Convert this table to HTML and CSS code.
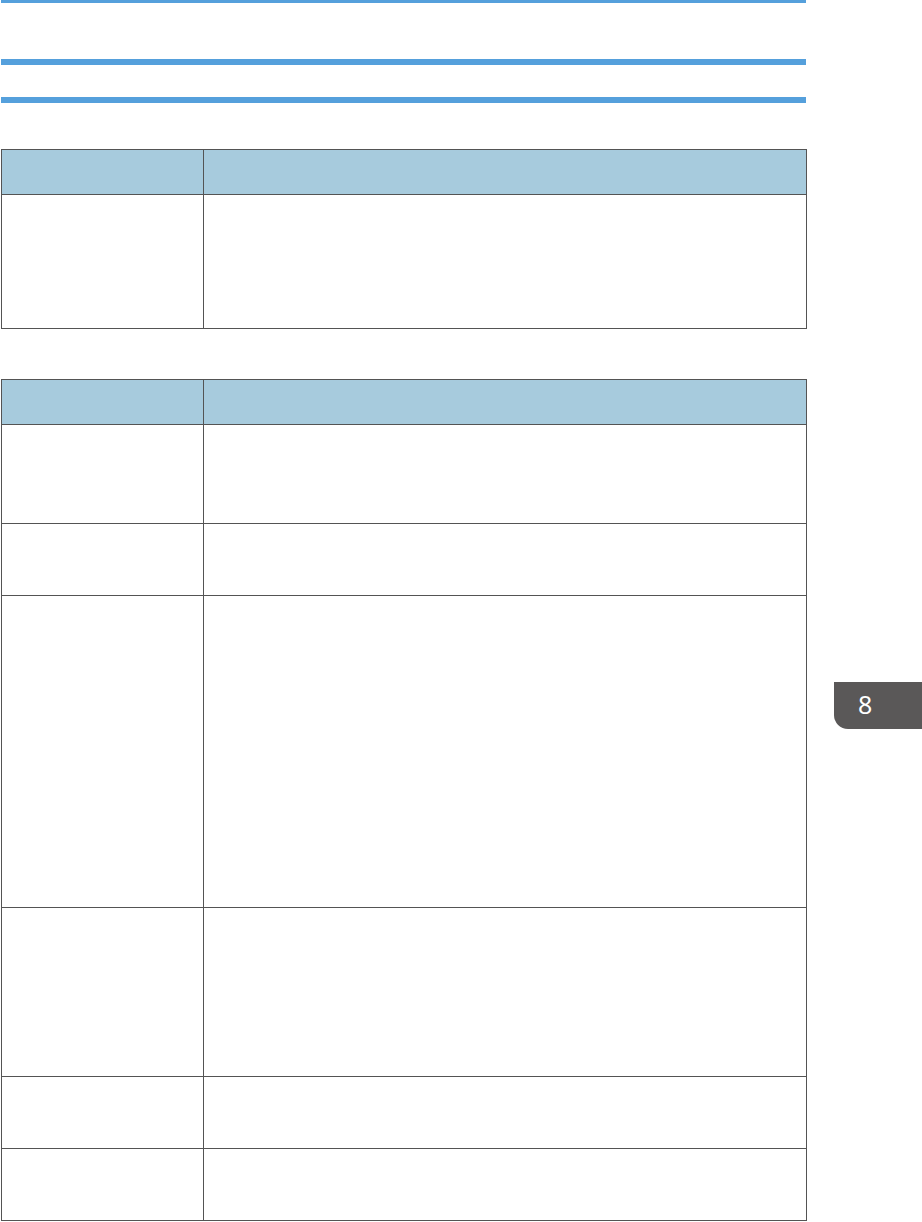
FILE: index.html
```html
<!DOCTYPE html>
<html>
<head>
<meta charset="utf-8">
<link rel="stylesheet" href="styles.css">
</head>
<body>
<div class="page">
  <div class="bar bar-top"></div>
  <div class="bar bar-h1"></div>
  <div class="bar bar-h2"></div>

  <div class="tbl tbl-1">
    <div class="cell head h45"></div>
    <div class="cell head h45"></div>
    <div class="cell h134"></div>
    <div class="cell h134"></div>
  </div>

  <div class="tbl tbl-2">
    <div class="cell head h45"></div>
    <div class="cell head h45"></div>
    <div class="cell h99"></div>
    <div class="cell h99"></div>
    <div class="cell h72"></div>
    <div class="cell h72"></div>
    <div class="cell h312"></div>
    <div class="cell h312"></div>
    <div class="cell h169"></div>
    <div class="cell h169"></div>
    <div class="cell h72"></div>
    <div class="cell h72"></div>
    <div class="cell h72"></div>
    <div class="cell h72"></div>
  </div>
</div>
<div class="chapter-tab">8</div>
</body>
</html>
```
FILE: styles.css
```css
html, body {
  margin: 0;
  padding: 0;
  background: #ffffff;
}
body {
  font-family: "Noto Sans", "Liberation Sans", sans-serif;
  width: 922px;
  height: 1222px;
  position: relative;
  overflow: hidden;
}
.page {
  display: flex;
  flex-direction: column;
  padding-left: 1px;
}
.bar {
  background: #55a0dc;
  width: 805px;
}
.bar-top {
  height: 3px;
}
.bar-h1 {
  height: 6px;
  margin-top: 56px;
}
.bar-h2 {
  height: 6px;
  margin-top: 32px;
}
.tbl {
  display: grid;
  grid-template-columns: 202px 603px;
  width: 805px;
  border-left: 1px solid #545454;
  border-top: 1px solid #545454;
}
.tbl-1 {
  margin-top: 46px;
}
.tbl-2 {
  margin-top: 50px;
}
.cell {
  box-sizing: border-box;
  border-right: 1px solid #545454;
  border-bottom: 1px solid #545454;
}
.head {
  background: #a7cbdd;
}
.h45 { height: 45px; }
.h72 { height: 72px; }
.h99 { height: 99px; }
.h134 { height: 134px; }
.h169 { height: 169px; }
.h312 { height: 312px; }

.chapter-tab {
  position: absolute;
  left: 834px;
  top: 682px;
  width: 88px;
  height: 47px;
  box-sizing: border-box;
  padding-left: 24px;
  background: #5a5858;
  border-bottom-left-radius: 14px;
  color: #ffffff;
  font-family: "Noto Sans", "Liberation Sans", sans-serif;
  font-size: 25px;
  line-height: 44px;
}
```
